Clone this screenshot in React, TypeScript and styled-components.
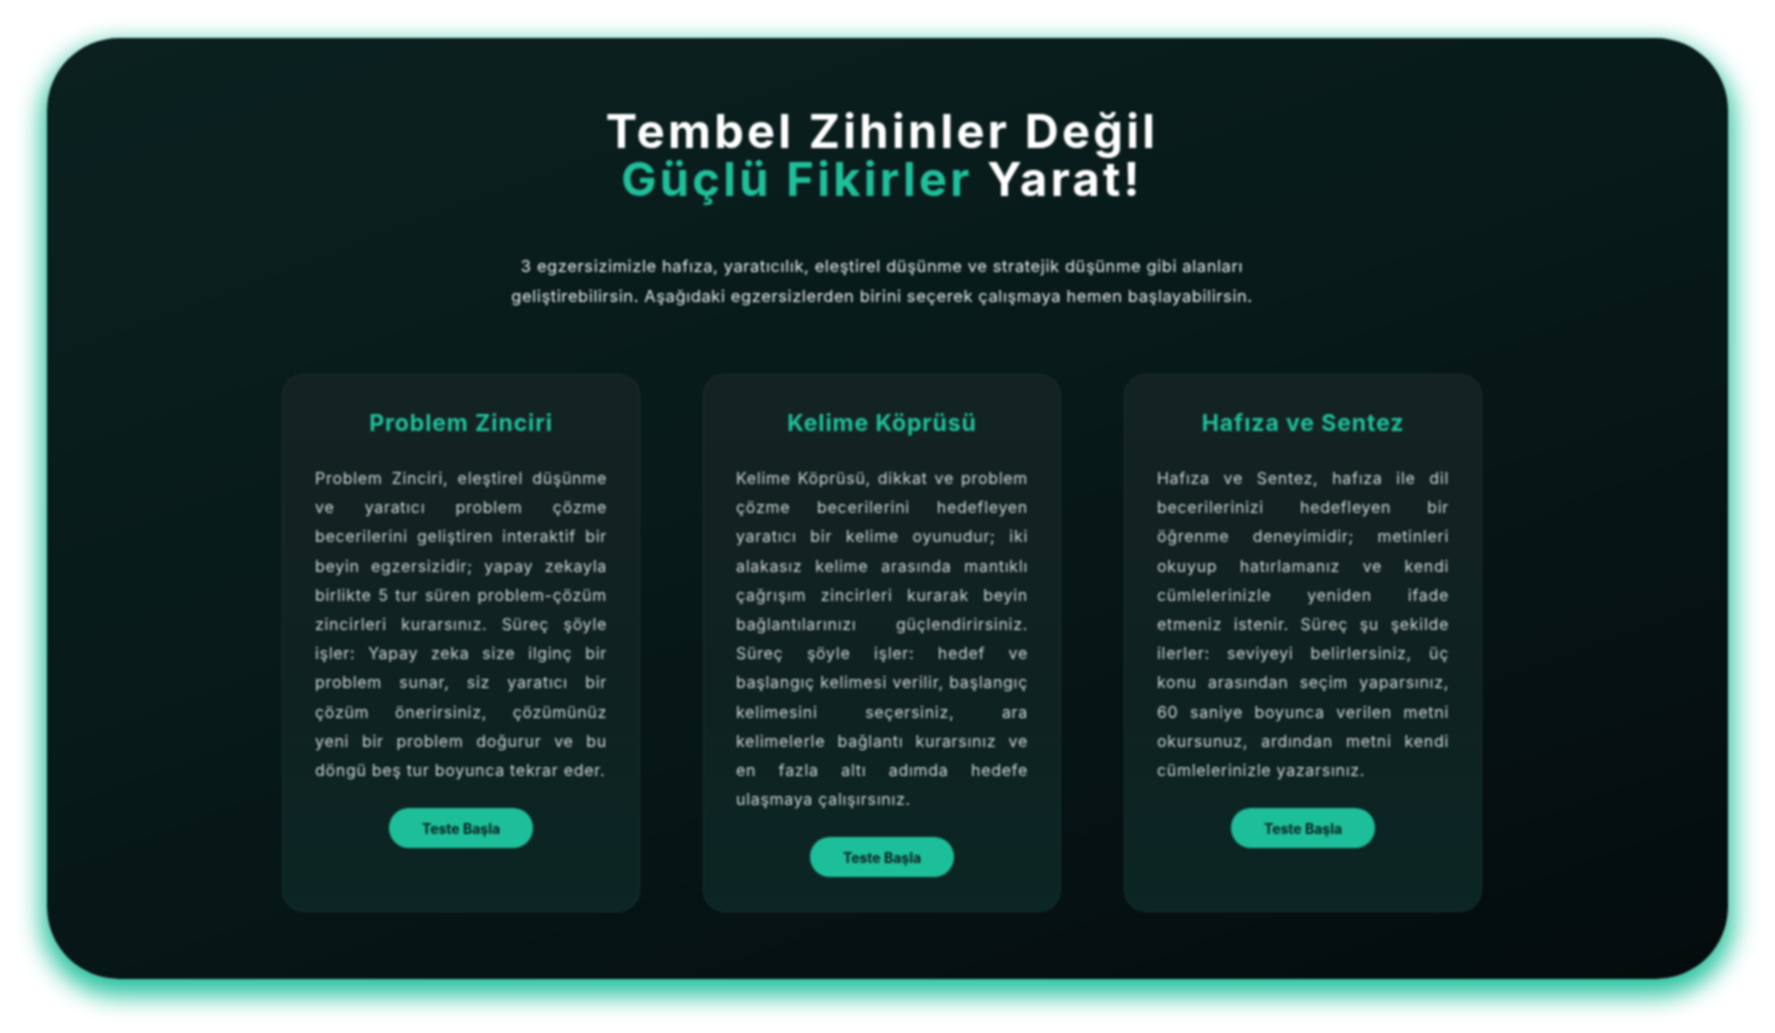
import React from "react";
import styled, { createGlobalStyle } from "styled-components";

const GlobalStyle = createGlobalStyle`
  html, body { margin: 0; padding: 0; background: #ffffff; }
  body { font-family: Inter, "Noto Sans", sans-serif; }
  * { box-sizing: border-box; }
`;

const Page = styled.div`
  width: 1775px;
  height: 1033px;
  padding: 38px 47px 54px 47px;
  background: #ffffff;
  filter: blur(1.1px);
`;

const Panel = styled.section`
  height: 100%;
  border-radius: 72px;
  background: linear-gradient(160deg, #0b2120 0%, #081a1a 45%, #050c0d 100%);
  box-shadow: 0 11px 24px 6px #2cc4a1;
  display: flex;
  flex-direction: column;
  align-items: center;
  padding: 69px 11px 0 0;
`;

const Title = styled.h1`
  margin: 0;
  text-align: center;
  font-family: Inter, "Liberation Sans", sans-serif;
  font-weight: 700;
  font-size: 47px;
  letter-spacing: 3.3px;
  color: #ffffff;
`;

const TitleLine = styled.span`
  display: block;
  height: 48px;
  line-height: 48px;
`;

const Accent = styled.span`
  color: #1fbf9b;
`;

const Lead = styled.p`
  margin: 48px 0 0;
  text-align: center;
  font-size: 16.5px;
  line-height: 30px;
  letter-spacing: 0.6px;
  color: #e8eeec;
`;

const Cards = styled.div`
  margin-top: 63px;
  display: grid;
  grid-template-columns: repeat(3, 358px);
  column-gap: 63px;
  align-items: stretch;
`;

const Card = styled.article`
  height: 538px;
  border-radius: 22px;
  border: 1px solid rgba(255, 255, 255, 0.05);
  background: linear-gradient(180deg, #142322 0%, #0f2221 55%, #0b2624 100%);
  padding: 34px 32px 32px;
  display: flex;
  flex-direction: column;
  align-items: center;
`;

const CardTitle = styled.h2`
  margin: 0;
  font-family: Inter, "Noto Sans", sans-serif;
  font-weight: 700;
  font-size: 23px;
  line-height: 28px;
  color: #1fbf9b;
  letter-spacing: 0.9px;
`;

const CardText = styled.p`
  margin: 27px 0 0;
  width: 100%;
  text-align: justify;
  font-size: 16px;
  line-height: 29.2px;
  letter-spacing: 0.7px;
  color: #cfd6d4;
`;

const StartButton = styled.button`
  flex-shrink: 0;
  margin-top: 23px;
  width: 144px;
  height: 40px;
  border: none;
  border-radius: 20px;
  background: #1dbf9a;
  color: #0c1f1c;
  font-family: Inter, "Noto Sans", sans-serif;
  font-weight: 700;
  font-size: 14px;
  cursor: pointer;
`;

const items = [
  {
    title: "Problem Zinciri",
    text: "Problem Zinciri, eleştirel düşünme ve yaratıcı problem çözme becerilerini geliştiren interaktif bir beyin egzersizidir; yapay zekayla birlikte 5 tur süren problem-çözüm zincirleri kurarsınız. Süreç şöyle işler: Yapay zeka size ilginç bir problem sunar, siz yaratıcı bir çözüm önerirsiniz, çözümünüz yeni\u00a0bir problem doğurur ve bu döngü beş tur boyunca tekrar eder.",
  },
  {
    title: "Kelime Köprüsü",
    text: "Kelime Köprüsü, dikkat ve problem çözme becerilerini hedefleyen yaratıcı bir kelime oyunudur; iki alakasız kelime arasında mantıklı çağrışım zincirleri kurarak beyin bağlantılarınızı güçlendirirsiniz. Süreç şöyle işler: hedef ve başlangıç kelimesi verilir, başlangıç kelimesini seçersiniz, ara kelimelerle bağlantı kurarsınız ve en fazla altı adımda hedefe ulaşmaya çalışırsınız.",
  },
  {
    title: "Hafıza ve Sentez",
    text: "Hafıza ve Sentez, hafıza ile dil becerilerinizi hedefleyen bir öğrenme deneyimidir; metinleri okuyup hatırlamanız ve kendi cümlelerinizle yeniden ifade etmeniz istenir. Süreç şu şekilde ilerler: seviyeyi belirlersiniz, üç konu arasından seçim yaparsınız, 60 saniye boyunca verilen metni okursunuz, ardından metni kendi cümlelerinizle yazarsınız.",
  },
];

export default function App() {
  return (
    <>
      <GlobalStyle />
      <Page>
        <Panel>
          <Title>
            <TitleLine>Tembel Zihinler Değil</TitleLine>
            <TitleLine>
              <Accent>Güçlü Fikirler</Accent> Yarat!
            </TitleLine>
          </Title>
          <Lead>
            3 egzersizimizle hafıza, yaratıcılık, eleştirel düşünme ve stratejik düşünme gibi alanları
            <br />
            geliştirebilirsin. Aşağıdaki egzersizlerden birini seçerek çalışmaya hemen başlayabilirsin.
          </Lead>
          <Cards>
            {items.map((it) => (
              <Card key={it.title}>
                <CardTitle>{it.title}</CardTitle>
                <CardText>{it.text}</CardText>
                <StartButton>Teste Başla</StartButton>
              </Card>
            ))}
          </Cards>
        </Panel>
      </Page>
    </>
  );
}
